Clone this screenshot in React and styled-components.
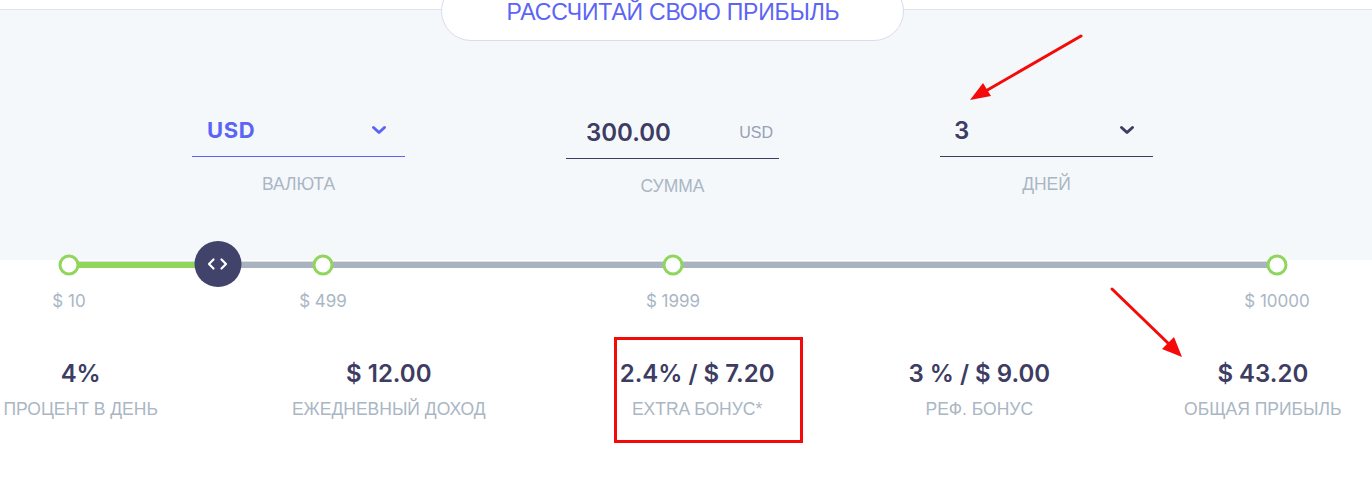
import React from 'react';
import styled, { createGlobalStyle } from 'styled-components';

const GlobalStyle = createGlobalStyle`
  * { box-sizing: border-box; }
  body {
    margin: 0;
    background: #ffffff;
    font-family: "Liberation Sans", Arial, sans-serif;
  }
`;

const Page = styled.div`
  position: relative;
  width: 1372px;
  height: 482px;
  overflow: hidden;
  padding-top: 9px;
`;

const Calc = styled.section`
  background: #f5f8fb;
  border-top: 1px solid #dfe2ec;
  padding-bottom: 64px;
`;

const Inner = styled.div`
  width: 1345px;
`;

const TitlePill = styled.div`
  width: 463px;
  height: 60px;
  margin: -29px auto 0;
  padding: 3px 0 0 1px;
  border: 1px solid #d9dcea;
  border-radius: 32px;
  background: #ffffff;
  display: flex;
  align-items: center;
  justify-content: center;
  color: #5b64f4;
  font-size: 23px;
  letter-spacing: -0.2px;
`;

const Fields = styled.div`
  display: flex;
  justify-content: center;
  gap: 161px;
  margin-top: 69px;
`;

const Field = styled.div`
  width: 213px;
  display: flex;
  flex-direction: column;
  margin-top: ${p => p.$shift || 0}px;
`;

const ValueRow = styled.div`
  height: 47px;
  display: flex;
  align-items: center;
  justify-content: space-between;
  padding: 0 ${p => p.$right}px 6px ${p => p.$left}px;
  border-bottom: 1px solid ${p => (p.$accent ? '#5b64f4' : '#3d3c62')};
`;

const Value = styled.span`
  font-family: Inter, "Liberation Sans", sans-serif;
  font-weight: ${p => (p.$accent ? 700 : 600)};
  font-size: ${p => p.$size}px;
  color: ${p => (p.$accent ? '#5b64f4' : '#3d3c62')};
  letter-spacing: ${p => (p.$accent ? '0.6px' : '0')};
`;

const Unit = styled.span`
  font-size: 16px;
  color: #95a1b5;
  margin-top: 2px;
`;

const FieldLabel = styled.div`
  margin-top: 17px;
  line-height: 20px;
  text-align: center;
  font-size: 17.5px;
  color: #aab6c4;
`;

const Slider = styled.div`
  position: relative;
  height: 46px;
  margin: -19px 68px 0 69px;
  display: flex;
  align-items: center;
`;

const Track = styled.div`
  flex: 1;
  height: 6px;
  margin-top: 1px;
  background: #a9b3c0;
  box-shadow: 0 -1px 0 #d9dde4;
`;

const Fill = styled.div`
  height: 100%;
  background: #8fd65b;
`;

const Dot = styled.span`
  position: absolute;
  top: 50%;
  width: 21px;
  height: 21px;
  margin-top: 1px;
  border: 3.5px solid #8fd65b;
  border-radius: 50%;
  background: #ffffff;
  transform: translate(-50%, -50%);
`;

const Handle = styled.span`
  position: absolute;
  top: 0;
  width: 47px;
  height: 46px;
  border-radius: 50%;
  background: #41436b;
  transform: translateX(-50%);
  display: flex;
  align-items: center;
  justify-content: center;
`;

const Scale = styled.div`
  position: relative;
  height: 20px;
  margin: 4px 68px 0 69px;
`;

const ScaleLabel = styled.span`
  position: absolute;
  top: 0;
  transform: translateX(-50%);
  white-space: nowrap;
  line-height: 20px;
  font-family: Inter, "Liberation Sans", sans-serif;
  font-size: 17px;
  color: #aab6c4;
`;

const Stats = styled.div`
  display: flex;
  justify-content: center;
  gap: 134px;
  margin-top: 48px;
`;

const Stat = styled.div`
  display: flex;
  flex-direction: column;
  align-items: center;
`;

const StatValue = styled.div`
  line-height: 30px;
  font-family: Inter, "Liberation Sans", sans-serif;
  font-weight: 600;
  font-size: 24px;
  color: #3d3c62;
`;

const StatLabel = styled.div`
  margin-top: 10px;
  line-height: 20px;
  font-size: 17.5px;
  color: #aab6c4;
  white-space: nowrap;
`;

const Annotations = styled.svg`
  position: absolute;
  left: 0;
  top: 0;
  pointer-events: none;
`;

const Chevron = ({ color }) => (
  <svg width="16" height="10" viewBox="0 0 16 10">
    <path d="M2.5 2.5 L8 7.5 L13.5 2.5" fill="none" stroke={color} strokeWidth="3" strokeLinecap="round" strokeLinejoin="round" />
  </svg>
);

const stops = [
  { label: '$ 10', at: 0 },
  { label: '$ 499', at: 21.03 },
  { label: '$ 1999', at: 50 },
  { label: '$ 10000', at: 100 },
];
const handleAt = 12.33;

const stats = [
  { value: '4%', label: 'ПРОЦЕНТ В ДЕНЬ' },
  { value: '$ 12.00', label: 'ЕЖЕДНЕВНЫЙ ДОХОД' },
  { value: '2.4% / $ 7.20', label: 'EXTRA БОНУС*' },
  { value: '3 % / $ 9.00', label: 'РЕФ. БОНУС' },
  { value: '$ 43.20', label: 'ОБЩАЯ ПРИБЫЛЬ' },
];

export default function App() {
  return (
    <>
      <GlobalStyle />
      <Page>
        <Calc>
          <Inner>
            <TitlePill>РАССЧИТАЙ СВОЮ ПРИБЫЛЬ</TitlePill>
            <Fields>
              <Field>
                <ValueRow $accent $left={15} $right={18}>
                  <Value $accent $size={22}>USD</Value>
                  <Chevron color="#5b64f4" />
                </ValueRow>
                <FieldLabel>ВАЛЮТА</FieldLabel>
              </Field>
              <Field $shift={2}>
                <ValueRow $left={20} $right={6}>
                  <Value $size={24}>300.00</Value>
                  <Unit>USD</Unit>
                </ValueRow>
                <FieldLabel>СУММА</FieldLabel>
              </Field>
              <Field>
                <ValueRow $left={14} $right={18}>
                  <Value $size={24}>3</Value>
                  <Chevron color="#3d3c62" />
                </ValueRow>
                <FieldLabel>ДНЕЙ</FieldLabel>
              </Field>
            </Fields>
          </Inner>
        </Calc>

        <Inner>
          <Slider>
            <Track>
              <Fill style={{ width: `${handleAt}%` }} />
            </Track>
            {stops.map(s => (
              <Dot key={s.label} style={{ left: `${s.at}%` }} />
            ))}
            <Handle style={{ left: `${handleAt}%` }}>
              <svg width="24" height="14" viewBox="0 0 24 14">
                <path d="M8 2.5 L3.5 7 L8 11.5 M16 2.5 L20.5 7 L16 11.5" fill="none" stroke="#ffffff" strokeWidth="2.2" strokeLinecap="round" strokeLinejoin="round" />
              </svg>
            </Handle>
          </Slider>
          <Scale>
            {stops.map(s => (
              <ScaleLabel key={s.label} style={{ left: `${s.at}%` }}>{s.label}</ScaleLabel>
            ))}
          </Scale>

          <Stats>
            {stats.map(s => (
              <Stat key={s.label}>
                <StatValue>{s.value}</StatValue>
                <StatLabel>{s.label}</StatLabel>
              </Stat>
            ))}
          </Stats>
        </Inner>

        <Annotations width="1372" height="482" viewBox="0 0 1372 482">
          <g stroke="#f50a0a" strokeWidth="3" fill="none" strokeLinecap="round">
            <line x1="1081" y1="36" x2="984" y2="92" />
            <line x1="1112" y1="289" x2="1170" y2="345" />
          </g>
          <g fill="#f50a0a">
            <polygon points="970,100 991,96 983,83" />
            <polygon points="1182,357 1174,337 1162,349" />
          </g>
          <rect x="615.5" y="338.5" width="186" height="103" fill="none" stroke="#f50a0a" strokeWidth="3" />
        </Annotations>
      </Page>
    </>
  );
}
